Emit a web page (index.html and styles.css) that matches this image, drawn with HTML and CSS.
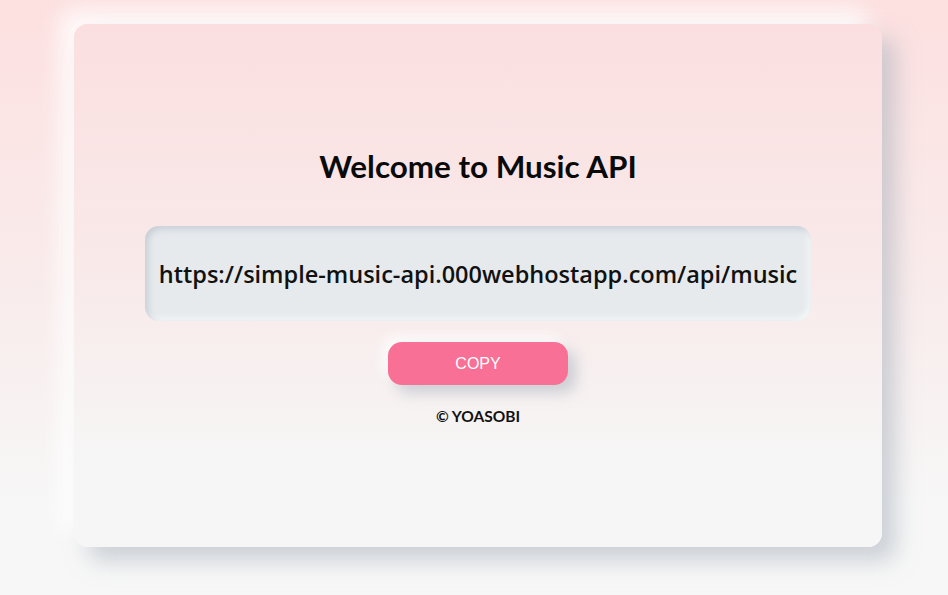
FILE: index.html
```html
<!DOCTYPE html>
<html>
<head>
<meta charset="utf-8">
<link rel="stylesheet" href="styles.css">
</head>
<body>
<div class="page">
  <main class="card">
    <h1 class="title">Welcome to Music API</h1>
    <div class="url-box">https://simple-music-api.000webhostapp.com/api/music</div>
    <button class="copy-btn">COPY</button>
    <p class="credit">© YOASOBI</p>
  </main>
</div>
</body>
</html>
```
FILE: styles.css
```css
html, body {
  margin: 0;
  padding: 0;
}
body {
  width: 948px;
  height: 595px;
  overflow: hidden;
  background: linear-gradient(180deg, #fde0e0 0%, #f9ecec 50%, #f7f7f7 85%, #f7f7f7 100%);
  font-family: "Lato", "Liberation Sans", sans-serif;
}
.page {
  padding: 24px 0 0 74px;
}
.card {
  width: 808px;
  height: 523px;
  box-sizing: border-box;
  border-radius: 14px;
  background: linear-gradient(180deg, #fbdfe0 0%, #f9e9e9 45%, #f6f6f6 85%, #f6f6f6 100%);
  box-shadow: 14px 14px 22px rgba(170, 178, 190, 0.55), -14px -14px 22px rgba(255, 255, 255, 0.85);
  display: flex;
  flex-direction: column;
  align-items: center;
  justify-content: center;
}
.title {
  margin: 0 0 40px;
  font-size: 31.4px;
  font-weight: 700;
  color: #0a0a0a;
  line-height: 40px;
}
.url-box {
  width: 666px;
  height: 95px;
  box-sizing: border-box;
  border-radius: 14px;
  background: #e6eaed;
  box-shadow: inset 3px 3px 6px rgba(170, 178, 190, 0.5), inset -3px -3px 6px rgba(255, 255, 255, 0.7);
  display: flex;
  align-items: center;
  justify-content: center;
  font-family: "Open Sans", "DejaVu Sans", sans-serif;
  font-weight: 600;
  font-size: 23.5px;
  color: #111;
  white-space: nowrap;
}
.copy-btn {
  margin-top: 21px;
  width: 180px;
  height: 43px;
  border: none;
  border-radius: 14px;
  background: #f87096;
  color: #fff;
  font-family: "Liberation Sans", Arial, sans-serif;
  font-size: 16px;
  box-shadow: 8px 8px 14px rgba(170, 178, 190, 0.55), -6px -6px 12px rgba(255, 255, 255, 0.8);
}
.credit {
  margin: 22px 0 0;
  font-size: 15.5px;
  font-weight: 700;
  color: #111;
}
```
